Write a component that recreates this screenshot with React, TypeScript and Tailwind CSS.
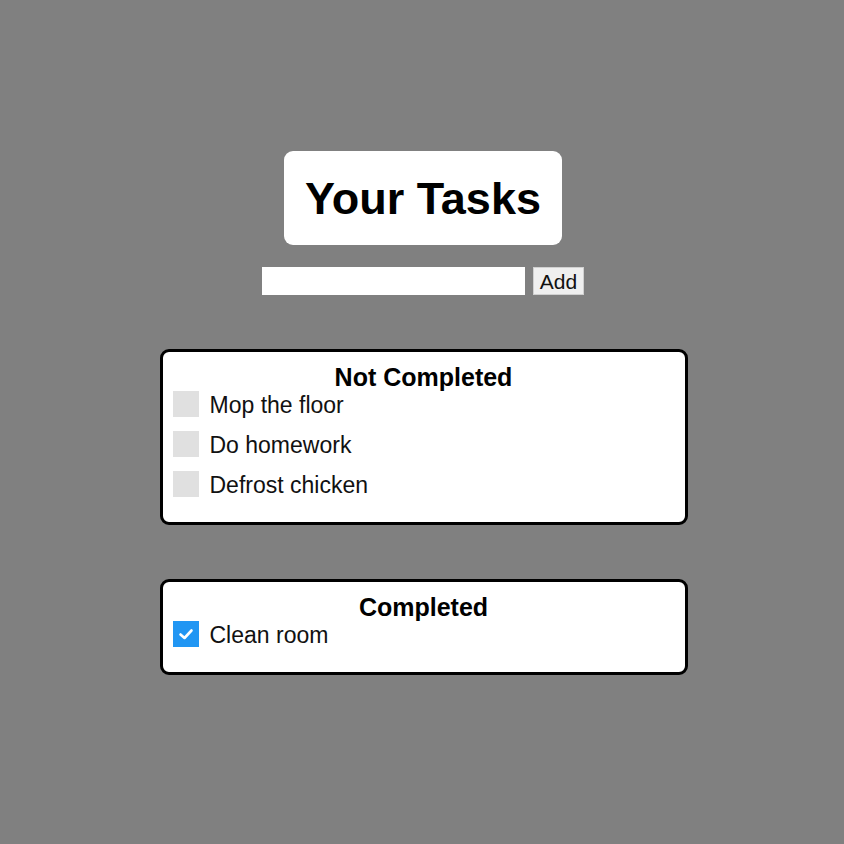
import React, { useState } from 'react';

type Task = { id: number; text: string; done: boolean };

const initialTasks: Task[] = [
  { id: 1, text: 'Mop the floor', done: false },
  { id: 2, text: 'Do homework', done: false },
  { id: 3, text: 'Defrost chicken', done: false },
  { id: 4, text: 'Clean room', done: true },
];

const Check = ({ done, onClick }: { done: boolean; onClick: () => void }) => (
  <button
    onClick={onClick}
    className={`w-[26px] h-[26px] shrink-0 flex items-center justify-center ${done ? 'bg-[#2196f3]' : 'bg-[#e0e0e0]'}`}
  >
    {done && (
      <svg width="16" height="16" viewBox="0 0 16 16" fill="none">
        <path d="M2.5 8.5 L6.5 12 L13.5 4.5" stroke="white" strokeWidth="2.6" strokeLinecap="round" strokeLinejoin="round" />
      </svg>
    )}
  </button>
);

const TaskCard = ({ title, tasks, onToggle }: { title: string; tasks: Task[]; onToggle: (id: number) => void }) => (
  <div className="w-[528px] bg-white border-[3px] border-black rounded-[9px] px-[10px] pt-[11px] pb-[25px]">
    <h2 className="text-center text-[25px] font-bold leading-[28px] text-black">{title}</h2>
    <div className="flex flex-col gap-[14px]">
      {tasks.map((task) => (
        <div key={task.id} className="flex items-center gap-[11px] h-[26px]">
          <Check done={task.done} onClick={() => onToggle(task.id)} />
          <span className="text-[23px] text-[#111] pt-[2px]">{task.text}</span>
        </div>
      ))}
    </div>
  </div>
);

export default function App() {
  const [tasks, setTasks] = useState<Task[]>(initialTasks);
  const [input, setInput] = useState('');

  const toggle = (id: number) =>
    setTasks((ts) => ts.map((t) => (t.id === id ? { ...t, done: !t.done } : t)));

  const add = () => {
    if (!input.trim()) return;
    setTasks((ts) => [...ts, { id: Date.now(), text: input.trim(), done: false }]);
    setInput('');
  };

  return (
    <div className="min-h-[844px] bg-[#808080] flex flex-col items-center pt-[151px] font-['Liberation_Sans',Arial,sans-serif]">
      <div className="bg-white rounded-[9px] w-[278px] h-[94px] ml-[2px] flex items-center justify-center">
        <h1 className="text-[45px] font-bold text-black leading-none">Your Tasks</h1>
      </div>
      <div className="flex gap-[8px] mt-[22px] ml-[2px]">
        <input
          value={input}
          onChange={(e) => setInput(e.target.value)}
          className="w-[263px] h-[28px] bg-white outline-none px-1 text-[18px]"
        />
        <button
          onClick={add}
          className="w-[51px] h-[28px] bg-[#efefef] border border-[#d0d0d0] text-[21px] text-[#111] leading-none"
        >
          Add
        </button>
      </div>
      <div className="mt-[54px] ml-[3px] flex flex-col gap-[54px]">
        <TaskCard title="Not Completed" tasks={tasks.filter((t) => !t.done)} onToggle={toggle} />
        <TaskCard title="Completed" tasks={tasks.filter((t) => t.done)} onToggle={toggle} />
      </div>
    </div>
  );
}
